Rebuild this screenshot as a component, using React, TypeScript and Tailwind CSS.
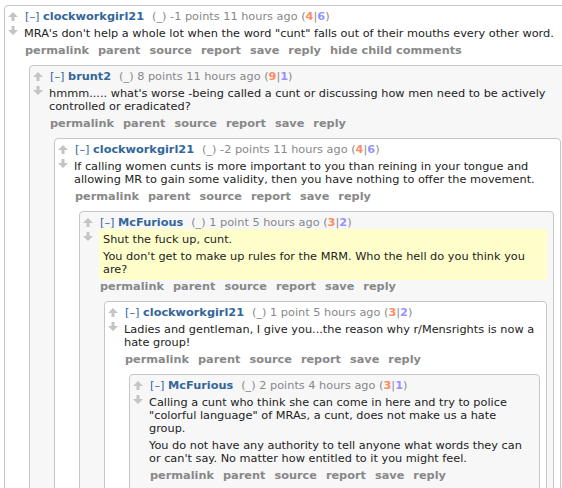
import type { ReactNode } from "react";

type Data = {
  user: string;
  points: string;
  age: string;
  up: number;
  down: number;
  body: string[];
  gray?: boolean;
  highlight?: boolean;
  hideChild?: boolean;
};

const comments: Data[] = [
  {
    user: "clockworkgirl21",
    points: "-1 points",
    age: "11 hours ago",
    up: 4,
    down: 6,
    body: [
      "MRA's don't help a whole lot when the word \"cunt\" falls out of their mouths every other word.",
    ],
    hideChild: true,
  },
  {
    user: "brunt2",
    points: "8 points",
    age: "11 hours ago",
    up: 9,
    down: 1,
    gray: true,
    body: [
      "hmmm..... what's worse -being called a cunt or discussing how men need to be actively controlled or eradicated?",
    ],
  },
  {
    user: "clockworkgirl21",
    points: "-2 points",
    age: "11 hours ago",
    up: 4,
    down: 6,
    body: [
      "If calling women cunts is more important to you than reining in your tongue and allowing MR to gain some validity, then you have nothing to offer the movement.",
    ],
  },
  {
    user: "McFurious",
    points: "1 point",
    age: "5 hours ago",
    up: 3,
    down: 2,
    gray: true,
    highlight: true,
    body: [
      "Shut the fuck up, cunt.",
      "You don't get to make up rules for the MRM. Who the hell do you think you are?",
    ],
  },
  {
    user: "clockworkgirl21",
    points: "1 point",
    age: "5 hours ago",
    up: 3,
    down: 2,
    body: [
      "Ladies and gentleman, I give you...the reason why r/Mensrights is now a hate group!",
    ],
  },
  {
    user: "McFurious",
    points: "2 points",
    age: "4 hours ago",
    up: 3,
    down: 1,
    gray: true,
    body: [
      "Calling a cunt who think she can come in here and try to police \"colorful language\" of MRAs, a cunt, does not make us a hate group.",
      "You do not have any authority to tell anyone what words they can or can't say. No matter how entitled to it you might feel.",
    ],
  },
];

const Arrow = ({ down }: { down?: boolean }) => (
  <svg
    width="10"
    height="9"
    viewBox="0 0 10 9"
    className={`shrink-0 ${down ? "rotate-180" : ""}`}
  >
    <path d="M5 0 L10 5 L6.5 5 L6.5 9 L3.5 9 L3.5 5 L0 5 Z" fill="#c4c4c4" />
  </svg>
);

const Comment = ({ index }: { index: number }) => {
  const c = comments[index];
  const buttons = ["permalink", "parent", "source", "report", "save", "reply"];
  if (c.hideChild) buttons.push("hide child comments");
  const child: ReactNode =
    index + 1 < comments.length ? (
      <div className="ml-[4px] mt-[8px]">
        <Comment index={index + 1} />
      </div>
    ) : null;

  return (
    <div
      className={`rounded-[4px] border border-[#c6c6c6] pl-[3px] pr-[6px] pt-[4px] pb-[12px] ${
        c.gray ? "bg-[#f7f7f8]" : "bg-white"
      }`}
    >
      <div className="flex">
        {/* vote arrows */}
        <div className="flex w-[10px] shrink-0 flex-col items-center gap-[5px] pt-[2px]">
          <Arrow />
          <Arrow down />
        </div>
        <div className="ml-[7px] min-w-0 flex-1">
          {/* tagline */}
          <div className="whitespace-nowrap leading-[13px] text-[#888]">
            <span className="text-[#369]">[–]</span>{" "}
            <span className="font-bold text-[#369]">{c.user}</span>
            <span className="ml-[8px]">(_)</span> {c.points} {c.age} (
            <span className="font-bold text-[#ff8b60]">{c.up}</span>|
            <span className="font-bold text-[#9494ff]">{c.down}</span>)
          </div>
          {/* body */}
          <div
            className={`-ml-[1px] flex flex-col gap-[4px] py-[4px] leading-[13px] text-[#222] ${
              c.highlight ? "bg-[#ffffcc] pl-[4px] pr-[2px]" : "pl-0"
            }`}
          >
            {c.body.map((p) => (
              <p key={p}>{p}</p>
            ))}
          </div>
          {/* buttons */}
          <div className="flex whitespace-nowrap font-bold leading-[13px] text-[#888]">
            {buttons.map((b) => (
              <span key={b} className="mr-[9px]">
                {b}
              </span>
            ))}
          </div>
          {child}
        </div>
      </div>
    </div>
  );
};

export default function App() {
  return (
    <div
      className="h-[488px] w-[562px] overflow-hidden bg-white text-[11.3px]"
      style={{ fontFamily: '"DejaVu Sans", Verdana, sans-serif' }}
    >
      <div className="w-[575px] pl-[4px] pt-[5px]">
        <Comment index={0} />
      </div>
    </div>
  );
}
